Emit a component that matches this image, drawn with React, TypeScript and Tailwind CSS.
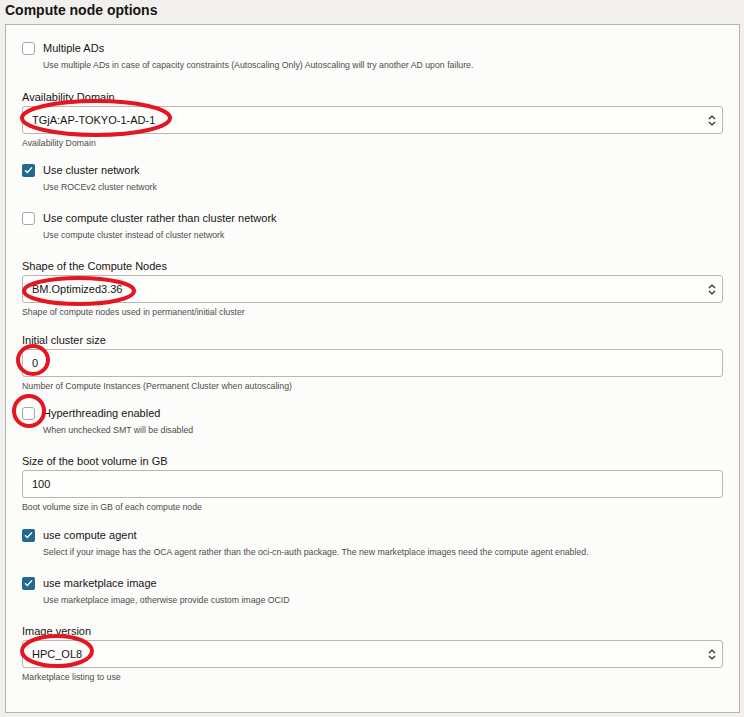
import React from "react";

const font = { fontFamily: '"Liberation Sans", Arial, sans-serif' };

function Check({ checked }: { checked?: boolean }) {
  return checked ? (
    <span className="flex h-[13px] w-[13px] shrink-0 items-center justify-center rounded-[2px] bg-[#226891]">
      <svg width="9" height="8" viewBox="0 0 9 8">
        <path d="M1 4.2 L3.4 6.4 L8 1.4" fill="none" stroke="#ffffff" strokeWidth="1.4" />
      </svg>
    </span>
  ) : (
    <span className="h-[13px] w-[13px] shrink-0 rounded-[3px] border border-[#aaa6a1] bg-white" />
  );
}

function CheckRow({ label, desc, checked, mt }: { label: string; desc: string; checked?: boolean; mt: string }) {
  return (
    <div className={mt}>
      <div className="flex h-4 items-center gap-2 text-[11px] leading-4 text-[#161513]">
        <Check checked={checked} />
        <span>{label}</span>
      </div>
      <div className="mt-[3px] pl-[21px] text-[8.75px] leading-3 text-[#4f4c49]">{desc}</div>
    </div>
  );
}

function Chevrons() {
  return (
    <svg width="8" height="11" viewBox="0 0 8 11" className="shrink-0">
      <path d="M1 4 L4 1 L7 4" fill="none" stroke="#2c2a28" strokeWidth="1.2" />
      <path d="M1 7 L4 10 L7 7" fill="none" stroke="#2c2a28" strokeWidth="1.2" />
    </svg>
  );
}

function Field({ label, value, helper, select, mt }: { label: string; value: string; helper: string; select?: boolean; mt: string }) {
  return (
    <div className={mt}>
      <div className="h-[14px] text-[11px] leading-[14px] text-[#161513]">{label}</div>
      <div className="mt-[2px] flex h-[28px] items-center justify-between rounded-[3px] border border-[#bbb6b0] bg-[#fdfdfc] pl-[9px] pr-[6px] text-[11px] text-[#161513]">
        <span>{value}</span>
        {select && <Chevrons />}
      </div>
      <div className="mt-[3px] text-[8.75px] leading-3 text-[#4f4c49]">{helper}</div>
    </div>
  );
}

export default function App() {
  return (
    <div className="relative min-h-[717px] w-[744px] bg-[#f1f0ee] pl-[5px] pr-[4px]" style={font}>
      <div className="h-6 text-[14px] font-bold leading-5 text-[#161513]">Compute node options</div>
      <div className="h-[689px] border border-[#b8b3ad] bg-[#fcfcfa] px-4 pt-[15px]">
        <CheckRow
          mt="mt-0"
          label="Multiple ADs"
          desc="Use multiple ADs in case of capacity constraints (Autoscaling Only) Autoscaling will try another AD upon failure."
        />
        <Field mt="mt-[19px]" label="Availability Domain" value="TGjA:AP-TOKYO-1-AD-1" helper="Availability Domain" select />
        <CheckRow mt="mt-[13px]" checked label="Use cluster network" desc="Use ROCEv2 cluster network" />
        <CheckRow mt="mt-[17px]" label="Use compute cluster rather than cluster network" desc="Use compute cluster instead of cluster network" />
        <Field mt="mt-[18px]" label="Shape of the Compute Nodes" value="BM.Optimized3.36" helper="Shape of compute nodes used in permanent/initial cluster" select />
        <Field mt="mt-[15px]" label="Initial cluster size" value="0" helper="Number of Compute Instances (Permanent Cluster when autoscaling)" />
        <CheckRow mt="mt-[13px]" label="Hyperthreading enabled" desc="When unchecked SMT will be disabled" />
        <Field mt="mt-[18px]" label="Size of the boot volume in GB" value="100" helper="Boot volume size in GB of each compute node" />
        <CheckRow
          mt="mt-[14px]"
          checked
          label="use compute agent"
          desc="Select if your image has the OCA agent rather than the oci-cn-auth package. The new marketplace images need the compute agent enabled."
        />
        <CheckRow mt="mt-[17px]" checked label="use marketplace image" desc="Use marketplace image, otherwise provide custom image OCID" />
        <Field mt="mt-[18px]" label="Image version" value="HPC_OL8" helper="Marketplace listing to use" select />
      </div>
      <svg className="pointer-events-none absolute left-0 top-0" width="744" height="717" viewBox="0 0 744 717">
        <g fill="none" stroke="#e4161f" strokeWidth="4">
          <ellipse cx="96" cy="118" rx="74" ry="17" />
          <ellipse cx="79" cy="291" rx="55" ry="13" />
          <ellipse cx="33" cy="360" rx="15" ry="14" />
          <ellipse cx="29" cy="411" rx="15" ry="15" />
          <ellipse cx="57" cy="651" rx="35" ry="15" />
        </g>
      </svg>
    </div>
  );
}
